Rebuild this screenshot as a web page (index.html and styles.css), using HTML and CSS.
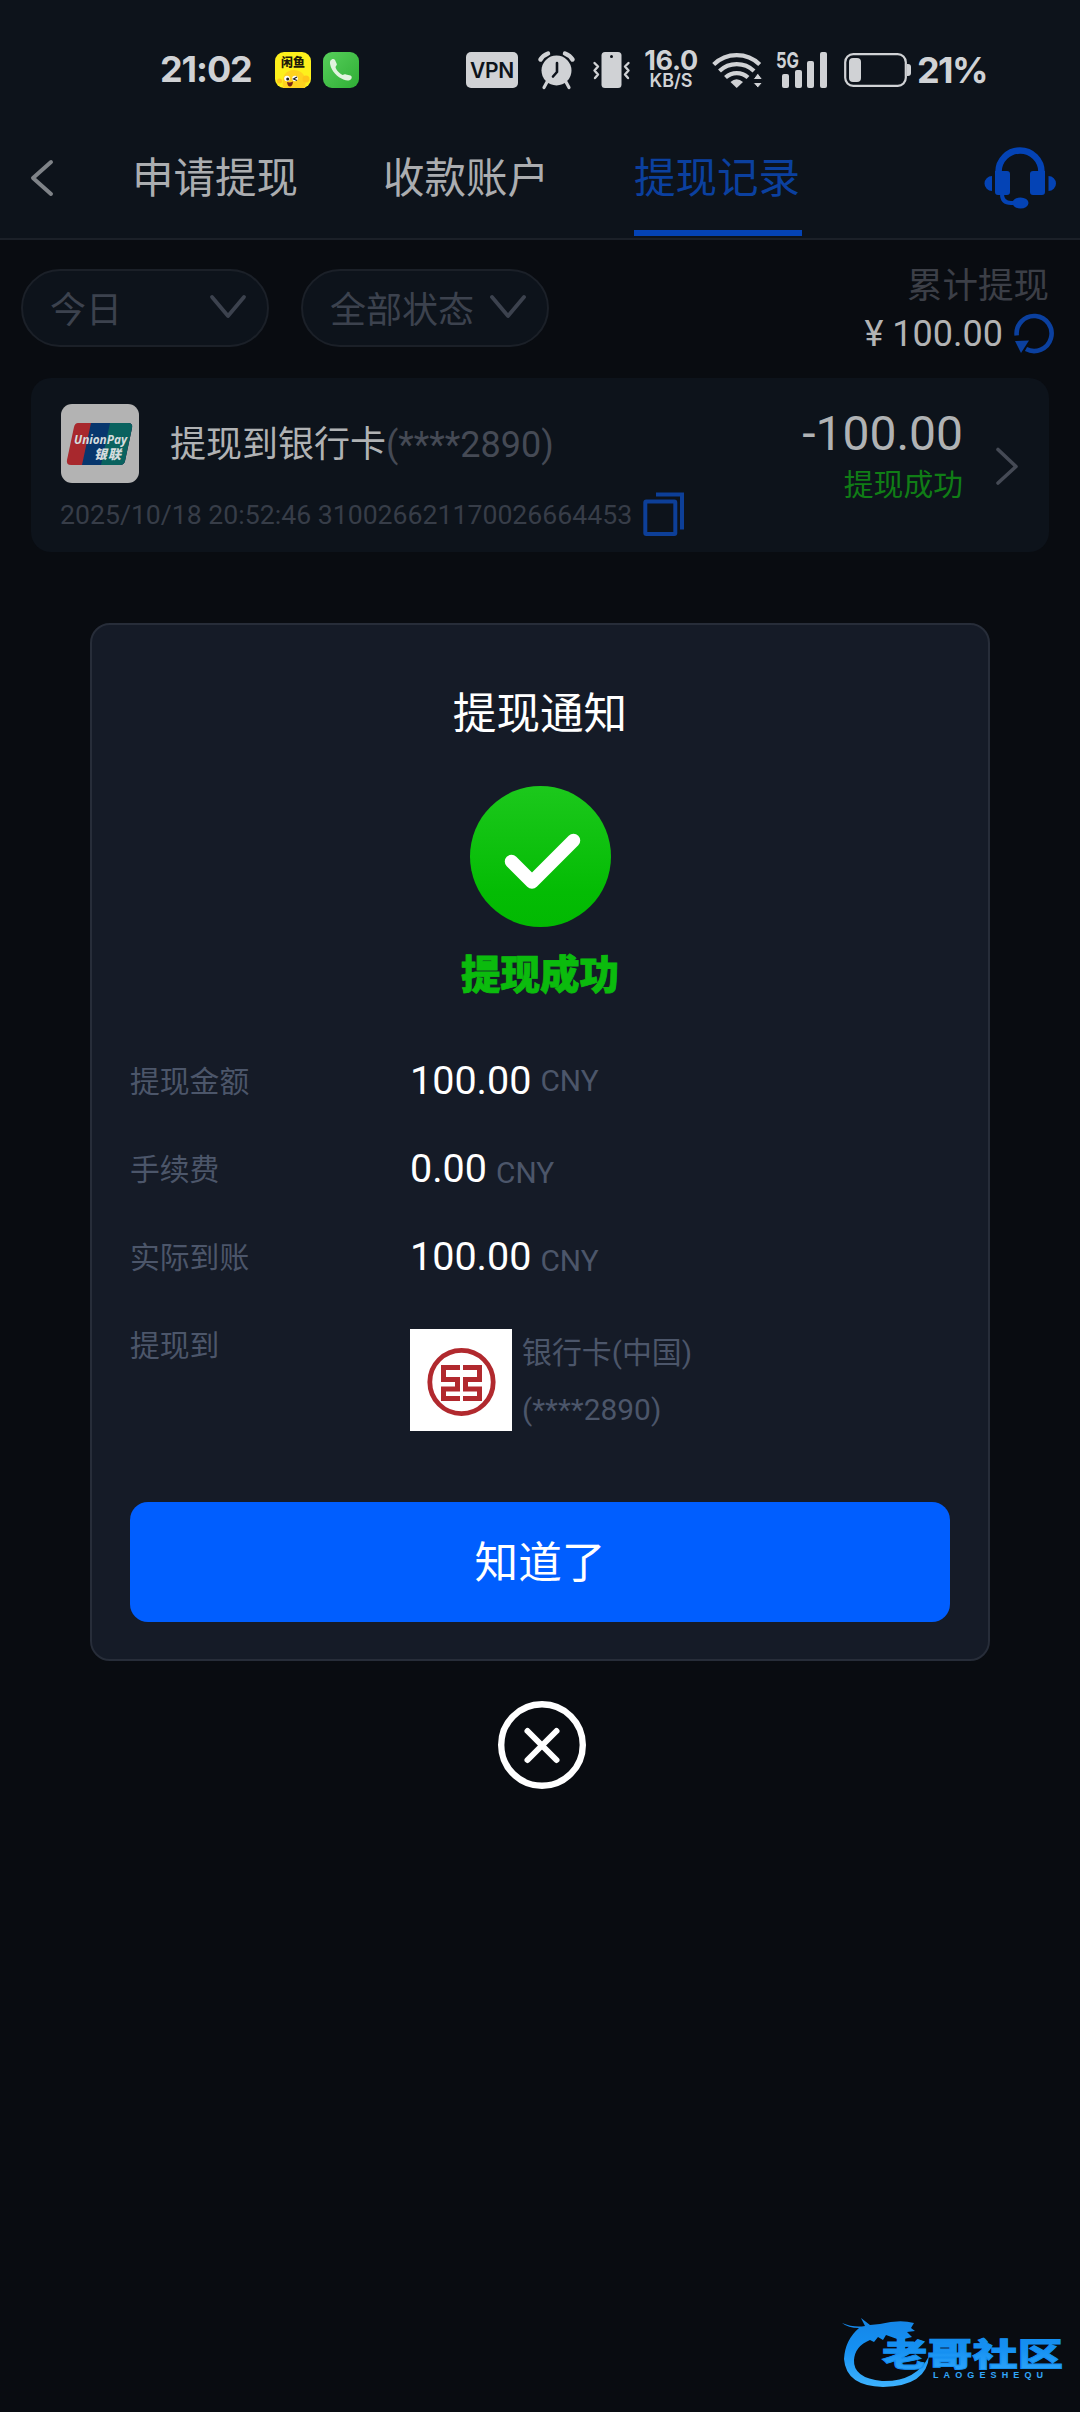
FILE: index.html
```
<!DOCTYPE html>
<html lang="zh-CN">
<head>
<meta charset="utf-8">
<title>提现记录</title>
<link rel="stylesheet" href="styles.css">
</head>
<body>
<div class="screen">
  <div class="status">
    <span class="clock">21:02</span>
    <svg class="app-fish" viewBox="0 0 36 36" width="36" height="36">
      <rect width="36" height="36" rx="9" fill="#fdf01c"/>
      <path d="M8 36q-2-18 11-18 14 1 11 18z" fill="#ffd21f"/>
      <circle cx="4.500" cy="29" r="2.500" fill="#ffc61a"/><circle cx="31" cy="27" r="3.500" fill="#ffc61a"/>
      <circle cx="12" cy="26.500" r="2.800" fill="#fff"/><circle cx="20" cy="26.500" r="2.800" fill="#fff"/>
      <circle cx="12.700" cy="27" r="1.500" fill="#222"/><path d="M22 25l-3.500 2 3.500 1.500" fill="none" stroke="#222" stroke-width="1.200"/>
      <path d="M12 30q3 1 6-.5-.5 5-3 5T12 30z" fill="#7c2412"/>
      <text x="18" y="15" text-anchor="middle" class="fish-name">闲鱼</text>
    </svg>
    <svg class="app-phone" viewBox="0 0 36 36" width="36" height="36">
      <defs><linearGradient id="callBg" x1="0" y1="0" x2="1" y2="1"><stop offset="0" stop-color="#57cf5b"/><stop offset="1" stop-color="#2fae35"/></linearGradient></defs>
      <rect width="36" height="36" rx="9" fill="url(#callBg)"/>
      <path d="M7.500 8.500C8.500 7 11 6.300 12 8l1.800 4c.4 1.200-1 2-1.300 3 .5 3 4 6.500 7 8 1.500-.2 2-1 3.500-.6l4.500 1.200c1.600.6 1.500 2.500.5 3.600-1.500 1.800-4.500 1.600-7 .6C14 25 8.500 19 7.200 12.500c-.3-1.500-.3-3 .3-4z" fill="#e2f3df"/>
    </svg>
    <span class="vpn">VPN</span>
    <svg class="alarm" viewBox="0 0 37 38" width="37" height="38" fill="none" stroke="#d0d2d5">
      <circle cx="18.500" cy="19.500" r="15" fill="#d0d2d5" stroke="none"/>
      <path d="M2.500 8.500Q5 4.500 10 2.500M34.500 8.500Q32 4.500 27 2.500" stroke-width="4.500" stroke-linecap="round"/>
      <path d="M9 31l-3 5.500M28 31l3 5.500" stroke-width="3.200" stroke-linecap="round"/>
      <path d="M19 12v9l-4 4.500" stroke="#0d131b" stroke-width="2.600" stroke-linecap="round" stroke-linejoin="round"/>
    </svg>
    <svg class="vibrate" viewBox="0 0 37 36" width="37" height="36" fill="none" stroke="#d0d2d5" stroke-width="2.400" stroke-linecap="round" stroke-linejoin="round">
      <rect x="8.500" y="0" width="20" height="36" rx="3.500" fill="#d0d2d5" stroke="none"/>
      <circle cx="18.500" cy="4.500" r="1.500" fill="#0d131b" stroke="none"/>
      <path d="M1.500 11l3.500 3.500-3.500 4 3.500 4-3 3.500M35.500 11l-3.500 3.500 3.500 4-3.500 4 3 3.500"/>
    </svg>
    <span class="speed"><b>16.0</b><i>KB/S</i></span>
    <svg class="wifi" viewBox="0 0 52 36" width="52" height="36" fill="none" stroke="#d0d2d5" stroke-width="4.200">
      <path d="M1.700 12.500a33 33 0 0 1 46 0M7.500 19a25 25 0 0 1 34.500 0M13.500 25.500a16.500 16.500 0 0 1 22.500 0"/>
      <path d="M18.500 30q6-5.500 12.500 0l-6.300 6z" fill="#d0d2d5" stroke="none"/>
      <path d="M41 27.500l4.800-6.500 4.800 6.500zM41 30.500l4.800 5.500 4.800-5.500z" fill="#d0d2d5" stroke="#0d131b" stroke-width="1"/>
    </svg>
    <svg class="signal" viewBox="0 0 52 37" width="52" height="37" fill="#d0d2d5">
      <text x="0" y="16.500" class="net" textLength="23" lengthAdjust="spacingAndGlyphs">5G</text>
      <rect x="6" y="23" width="7" height="14" rx="2"/><rect x="19" y="19" width="7" height="18" rx="2"/><rect x="31" y="10" width="7" height="27" rx="2"/><rect x="44" y="1" width="7" height="36" rx="2"/>
    </svg>
    <svg class="battery" viewBox="0 0 67 34" width="67" height="34">
      <rect x="1.200" y="1.200" width="60.600" height="31.600" rx="8" fill="none" stroke="#d0d2d5" stroke-width="2.200"/>
      <rect x="5" y="5" width="12" height="24" rx="4" fill="#d0d2d5"/>
      <path d="M63 11h1q3 0 3 3v6q0 3-3 3h-1z" fill="#d0d2d5"/>
    </svg>
    <span class="percent">21%</span>
  </div>

  <header class="header">
    <svg class="back" viewBox="0 0 24 38" width="24" height="38"><path d="M21 3L3 19l18 16" fill="none" stroke="#7f8388" stroke-width="4" stroke-linecap="round" stroke-linejoin="round"/></svg>
    <nav class="tabs">
      <a class="tab">申请提现</a>
      <a class="tab">收款账户</a>
      <a class="tab tab-on">提现记录</a>
    </nav>
    <svg class="service" viewBox="0 0 70 62" width="70" height="62" fill="#0443b5">
      <path d="M13.500 27V25a21.500 21.500 0 0 1 43 0v2" fill="none" stroke="#0443b5" stroke-width="6.500"/>
      <path d="M10 24h12q3 0 3 3v18q0 3-3 3H13q-3 0-3-3zM60 24H48q-3 0-3 3v18q0 3 3 3h9q3 0 3-3z"/>
      <path d="M7 29v15a7.500 7.500 0 0 1 0-15zM63.500 29v15a7.500 7.500 0 0 0 0-15z"/>
      <path d="M17 47q0 9 9 9h5" fill="none" stroke="#0443b5" stroke-width="4"/>
      <ellipse cx="35.500" cy="56" rx="8" ry="5.500"/>
    </svg>
  </header>

  <section class="filters">
    <div class="pill"><span>今日</span><svg viewBox="0 0 38 26" width="38" height="26"><path d="M3 3l16 19L35 3" fill="none" stroke="#3c424e" stroke-width="3.800" stroke-linecap="round" stroke-linejoin="round"/></svg></div>
    <div class="pill"><span>全部状态</span><svg viewBox="0 0 38 26" width="38" height="26"><path d="M3 3l16 19L35 3" fill="none" stroke="#3c424e" stroke-width="3.800" stroke-linecap="round" stroke-linejoin="round"/></svg></div>
    <div class="total">
      <div class="total-label">累计提现</div>
      <div class="total-sum"><span class="yen">¥</span><span>100.00</span>
        <svg viewBox="0 0 40 40" width="40" height="40"><path d="M2.700 21.500A17.500 17.500 0 1 1 12 35" fill="none" stroke="#0b409f" stroke-width="4.600"/><path d="M1 27l14-.5-8 12.500z" fill="#0b409f"/></svg>
      </div>
    </div>
  </section>

  <article class="record">
    <div class="record-main">
      <div class="record-top">
        <svg class="unionpay" viewBox="0 0 78 79" width="78" height="79">
          <defs><clipPath id="upClip"><path d="M17 19h50q5 0 4 5l-7 33q-1 4-5 4H10q-5 0-4-5l7-33q1-4 4-4z"/></clipPath></defs>
          <rect width="78" height="79" rx="11" fill="#b3b3b3"/>
          <g clip-path="url(#upClip)"><rect width="78" height="79" fill="#a8282d"/><path d="M30 19h50v42H21z" fill="#07366d"/><path d="M49 19h35v42H40z" fill="#09625f"/></g>
          <text x="13" y="40" class="up-en" textLength="53" lengthAdjust="spacingAndGlyphs">UnionPay</text>
          <text x="33" y="55" class="up-cn" textLength="27">银联</text>
        </svg>
        <div class="record-name">提现到银行卡<span>(****2890)</span></div>
      </div>
      <div class="record-meta"><span>2025/10/18 20:52:46 310026621170026664453</span>
        <svg viewBox="0 0 42 44" width="42" height="44" fill="none" stroke="#0d3f98" stroke-width="4"><rect x="2.300" y="9.500" width="30" height="32.500" rx="1"/><path d="M13 2.500h26v35"/></svg>
      </div>
    </div>
    <div class="record-side"><div class="record-sum">-100.00</div><div class="record-state">提现成功</div></div>
    <svg class="more" viewBox="0 0 24 38" width="24" height="38"><path d="M3 2.500L21 19.500 3 36" fill="none" stroke="#454a55" stroke-width="3.600" stroke-linecap="round" stroke-linejoin="round"/></svg>
  </article>

  <div class="overlay">
    <div class="dialog">
      <h1 class="dialog-title">提现通知</h1>
      <svg class="ok" viewBox="0 0 141 141" width="141" height="141">
        <defs><linearGradient id="okBg" x1="0" y1="0" x2="0" y2="1"><stop offset="0" stop-color="#1cc81c"/><stop offset=".75" stop-color="#04bc04"/><stop offset="1" stop-color="#02b902"/></linearGradient></defs>
        <circle cx="70.500" cy="70.500" r="70.500" fill="url(#okBg)"/>
        <path d="M41.500 75.500l20.500 20.500 41.500-41.500" fill="none" stroke="#fff" stroke-width="13.500" stroke-linecap="round" stroke-linejoin="round"/>
      </svg>
      <div class="ok-text">提现成功</div>
      <div class="row"><span class="label">提现金额</span><span class="value">100.00</span><span class="unit unit-first">CNY</span></div>
      <div class="row"><span class="label">手续费</span><span class="value">0.00</span><span class="unit">CNY</span></div>
      <div class="row"><span class="label">实际到账</span><span class="value">100.00</span><span class="unit">CNY</span></div>
      <div class="row row-bank"><span class="label">提现到</span>
        <svg class="icbc" viewBox="0 0 102 102" width="102" height="102">
          <rect width="102" height="102" fill="#fff"/>
          <circle cx="51.500" cy="53" r="31.700" fill="none" stroke="#b1292e" stroke-width="4.800"/>
          <g fill="none" stroke="#b1292e" stroke-width="5">
            <path d="M50 38.500H33.500v12H47.500v9.500H33.500v9.500H50"/>
            <path d="M53 38.500H69.500v12H55.500v9.500H69.500v9.500H53"/>
          </g>
        </svg>
        <div class="bank"><div>银行卡(中国)</div><div>(****2890)</div></div>
      </div>
      <button class="confirm">知道了</button>
    </div>
    <svg class="close" viewBox="0 0 88 88" width="88" height="88" fill="none" stroke="#fff"><circle cx="44" cy="44" r="40.800" stroke-width="6.400"/><path d="M29.500 30l29 29M58.500 30l-29 29" stroke-width="6" stroke-linecap="round"/></svg>
  </div>

  <svg class="watermark" viewBox="0 0 224 72" width="224" height="72">
    <defs><linearGradient id="wm" x1="0" y1="0" x2="0" y2="72" gradientUnits="userSpaceOnUse"><stop offset="0" stop-color="#1585e6"/><stop offset=".45" stop-color="#1590f2"/><stop offset="1" stop-color="#3fb4ff"/></linearGradient></defs>
    <g fill="url(#wm)">
      <path d="M0 7q12 5 23 3l-4-8 9 7 10-1q20-5 34-1l-3 5 4 3-8 1 5 5-12 3-14-5-3 5-5-3-4 5-4-2q-15 6-16 20-1 18 28 21 34 1 47-25-2 30-46 31Q4 70 2 43 3 24 17 12 6 12 0 7z"/>
      <text x="40" y="50" class="wm-cn" textLength="181" lengthAdjust="spacingAndGlyphs">老哥社区</text>
      <text x="91" y="62" class="wm-en" textLength="110" lengthAdjust="spacing">LAOGESHEQU</text>
    </g>
  </svg>
</div>
</body>
</html>
```
FILE: styles.css
```
* { box-sizing: border-box; }
body { margin: 0; background: #090c11; }
.screen {
  position: relative;
  width: 1080px;
  height: 2412px;
  overflow: hidden;
  display: flex;
  flex-direction: column;
  background: #090c11;
  font-family: Roboto, "Noto Sans CJK SC", sans-serif;
  font-weight: 400;
}
svg { display: block; flex: none; overflow: visible; }

/* system bar */
.status {
  height: 118px;
  padding: 21px 0 0 160px;
  display: flex;
  align-items: center;
  background: #0d131b;
  color: #d0d2d5;
  font-family: Inter, "Noto Sans CJK SC", sans-serif;
  white-space: nowrap;
}
.clock { width: 92px; font-size: 36px; font-weight: 650; letter-spacing: -1.1px; line-height: 40px; margin-top: -2px; }
.app-fish { margin-left: 23px; }
.app-phone { margin-left: 12px; }
.fish-name { font: 900 12px "Noto Sans CJK SC", sans-serif; fill: #1d1b08; }
.vpn {
  width: 52px; height: 36px; margin-left: 107px; border-radius: 5px;
  background: #d0d2d5; color: #0d131b;
  font-size: 21px; font-weight: 600; line-height: 37px; text-align: center; letter-spacing: -0.3px;
}
.alarm { margin-left: 20px; }
.vibrate { margin-left: 18px; }
.speed { width: 56px; margin-left: 13px; display: flex; flex-direction: column; align-items: center; }
.speed b { font-size: 27px; font-weight: 650; line-height: 22px; letter-spacing: -0.3px; }
.speed i { font-size: 18px; font-weight: 600; font-style: normal; line-height: 18px; }
.wifi { margin-left: 13px; }
.signal { margin-left: 12px; }
.net { font: 700 22px Inter, sans-serif; }
.battery { margin-left: 16px; }
.percent { margin-left: 6px; font-size: 36px; font-weight: 650; letter-spacing: -1.6px; line-height: 40px; }

/* page header */
.header {
  height: 122px;
  padding: 0 25px 0 30px;
  display: flex;
  align-items: center;
  background: #0d131b;
  border-bottom: 2px solid #1b2028;
}
.tabs { display: flex; gap: 83px; margin-left: 78px; align-self: stretch; }
.tab { width: 168px; height: 118px; font-size: 41.5px; line-height: 122px; color: #abadb0; white-space: nowrap; }
.tab-on { color: #0b409f; border-bottom: 6px solid #0443b5; }
.service { margin-left: auto; }

/* filters */
.filters { height: 138px; padding: 29px 26px 0 21px; display: flex; align-items: flex-start; }
.pill {
  width: 248px; height: 78px; margin-right: 32px; padding: 0 20px 2px 27px;
  display: flex; align-items: center; justify-content: space-between;
  background: #0d131b; border: 2px solid #1b2028; border-radius: 39px;
  font-size: 36px; color: #3c424e; white-space: nowrap;
}
.total { margin: -7px 0 0 auto; display: flex; flex-direction: column; align-items: flex-end; }
.total-label { padding-right: 5px; font-size: 35.5px; line-height: 48px; color: #3c3f47; }
.total-sum { display: flex; align-items: center; font-size: 36px; line-height: 48px; color: #b2b3b4; }
.yen { margin-right: 9px; }
.total-sum svg { margin-left: 11px; }

/* record card */
.record {
  height: 174px; margin: 0 31px; padding: 26px 30px 0 29px;
  display: flex; align-items: flex-start;
  background: #0d131b; border-radius: 20px;
}
.record-top { display: flex; align-items: center; padding-left: 1px; }
.up-en { font: italic 700 13px "Open Sans", sans-serif; fill: #d5dcde; }
.up-cn { font: italic 900 13px "Noto Sans CJK SC", sans-serif; fill: #d5dcde; }
.record-name { margin-left: 31px; padding-top: 3px; font-size: 36px; line-height: 50px; color: #b0b2b4; white-space: nowrap; }
.record-name span { color: #454a55; }
.record-meta { display: flex; align-items: center; margin-top: 8px; font-size: 26.65px; line-height: 44px; color: #373d48; white-space: nowrap; }
.record-meta span { padding-top: 2px; }
.record-meta svg { margin-left: 11px; }
.record-side { margin-left: auto; text-align: right; white-space: nowrap; }
.record-sum { font-size: 48px; line-height: 60px; color: #b0b2b4; }
.record-state { font-size: 29.8px; line-height: 41px; color: #107d16; }
.more { margin: 43px 0 0 32px; }

/* notice dialog lies over the list */
.overlay { position: absolute; inset: 0; padding-top: 623px; display: flex; flex-direction: column; align-items: center; }
.dialog {
  width: 900px; height: 1038px; padding: 60px 38px 0;
  display: flex; flex-direction: column;
  background: #151b27; border: 2px solid #272d39; border-radius: 20px;
}
.dialog-title { margin: 0; font-size: 43.6px; font-weight: 400; line-height: 60px; text-align: center; color: #fff; }
.ok { align-self: center; margin-top: 41px; }
.ok-text { margin: 19px 0 45px; font-size: 39.5px; font-weight: 900; line-height: 60px; text-align: center; color: #0bbb0d; -webkit-text-stroke: 0.8px #0bbb0d; }
.row { height: 88px; display: flex; align-items: flex-start; line-height: 60px; white-space: nowrap; }
.label { width: 280px; flex: none; font-size: 29.8px; line-height: 61px; color: #4c566a; }
.value { font-size: 39.5px; color: #fff; }
.unit { margin: 4px 0 0 9px; font-size: 29.8px; color: #4c566a; }
.unit-first { margin-top: 0; }
.row-bank { height: 187px; }
.icbc { margin-top: 14px; }
.bank { margin: 9px 0 0 10px; font-size: 29.9px; line-height: 57px; color: #4c566a; }
.confirm {
  height: 120px; width: 820px; padding: 3px 0 0; border: 0; border-radius: 18px;
  background: #005eff; color: #fff; font: 400 43.6px/117px Roboto, "Noto Sans CJK SC", sans-serif;
}
.close { margin: 40px 0 0 4px; }

/* corner mark */
.watermark { position: absolute; left: 842px; top: 2316px; }
.wm-cn { font: 900 32px "Noto Sans CJK SC", sans-serif; stroke: #1590f2; stroke-width: 1px; }
.wm-en { font: 700 9px "Liberation Sans", sans-serif; }
```
